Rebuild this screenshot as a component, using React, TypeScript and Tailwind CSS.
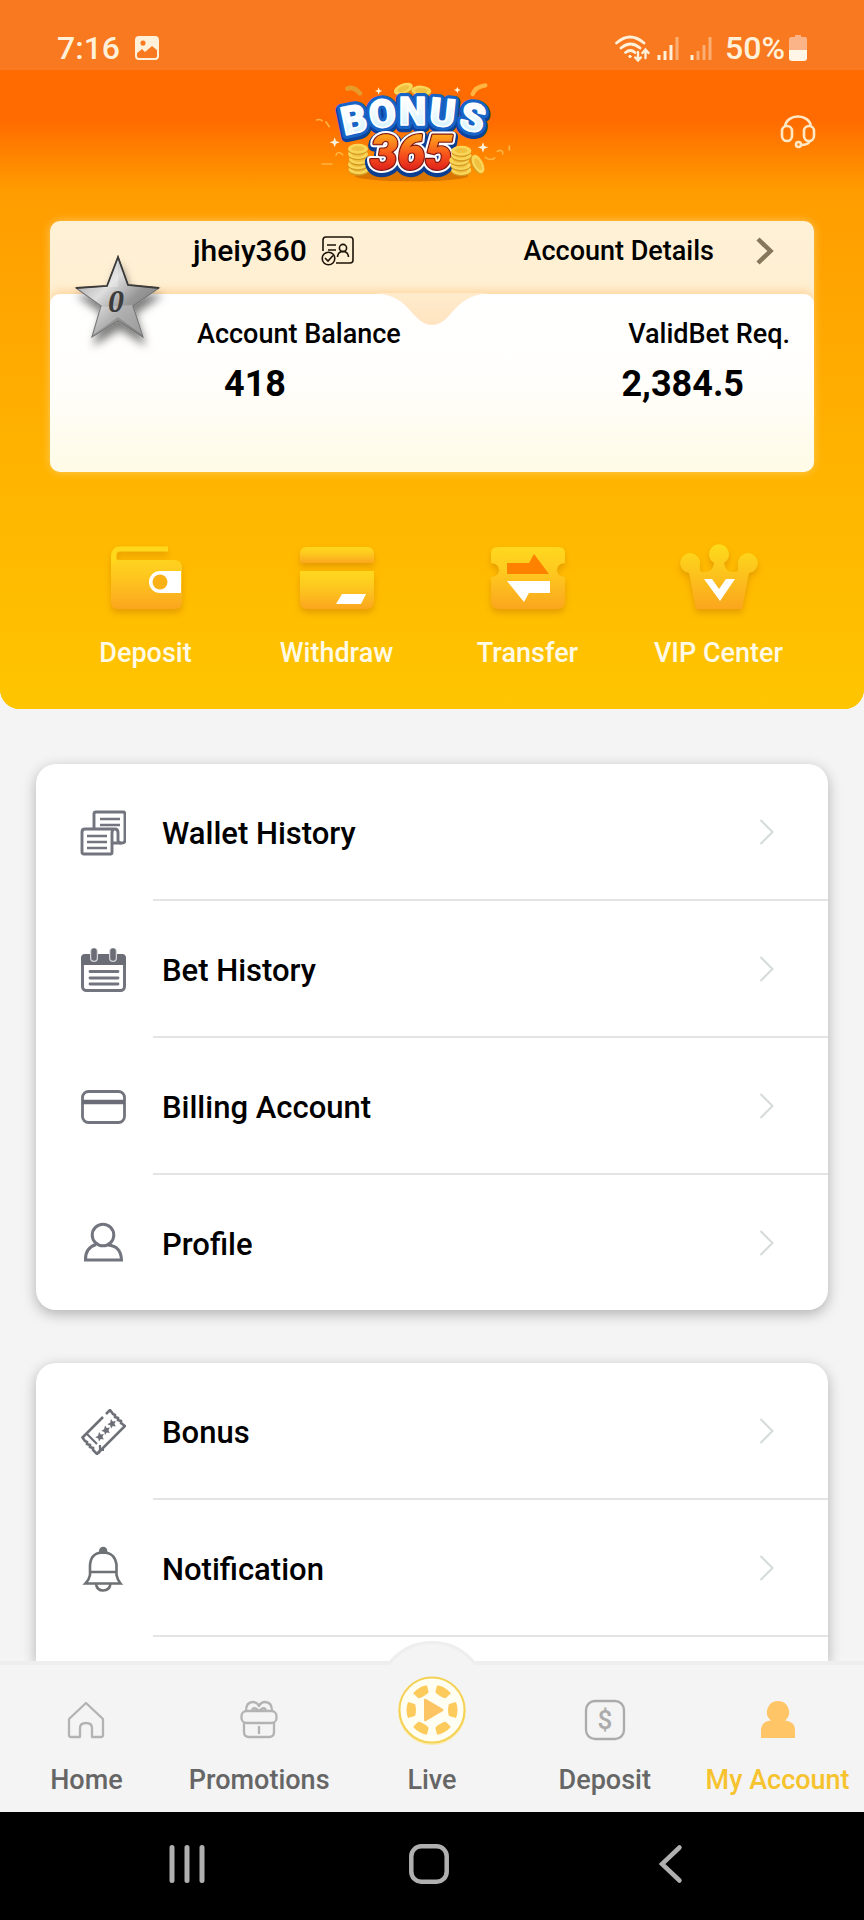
import React from "react";

type IconProps = { className?: string };

/* ---------- status bar ---------- */

function StatusBar() {
  return (
    <div className="flex h-[70px] items-center bg-[#f8791f] px-[57px] pt-[26px] text-[32px] leading-10 font-medium text-[#fff0da]">
      <span>7:16</span>
      <svg className="ml-[15px] size-6" viewBox="0 0 24 24" aria-hidden="true">
        <rect x="1" y="1" width="22" height="22" rx="3" fill="none" stroke="#fff0da" strokeWidth="2" />
        <path fillRule="evenodd" fill="#fff0da" d="M1 3q0-2 2-2h18q2 0 2 2v12l-6-5-7 6-3-3-6 5zM8 4.500a2.600 2.600 0 1 0 .01 0z" />
      </svg>
      <svg className="ml-auto h-[28px] w-[37px]" viewBox="0 0 37 28" fill="none" stroke="#fff0da" strokeLinecap="round" aria-hidden="true">
        <path strokeWidth="2.800" d="M2.500 9Q16 -3 30 9M7 14q9.500-8 19 0M11.500 18.500q5-4 9.500 0" />
        <circle cx="16" cy="22.500" r="1.200" fill="#fff0da" strokeWidth="1" />
        <path strokeWidth="2.400" d="M24 18v8M21.200 23.500L24 26.500l2.800-3M31.500 24v-8M28.500 19l3-3.500 3 3.500" />
      </svg>
      <svg className="ml-[6px] h-6 w-[22px]" viewBox="0 0 22 24" stroke="#fff0da" strokeWidth="3" aria-hidden="true">
        <path d="M2 19v5M8 15v9M14 9v15" />
        <path d="M20 1v23" opacity=".45" />
      </svg>
      <svg className="ml-[11px] h-6 w-[22px]" viewBox="0 0 22 24" stroke="#fff0da" strokeWidth="3" aria-hidden="true">
        <path d="M2 19v5" />
        <path d="M8 15v9M14 9v15M20 1v23" opacity=".45" />
      </svg>
      <span className="ml-[13px]">50%</span>
      <svg className="ml-1 h-[26px] w-[18px]" viewBox="0 0 18 26" aria-hidden="true">
        <path fill="#fbb487" d="M6 0h6v2h4q2 0 2 2v11H0V4q0-2 2-2h4z" />
        <path fill="#fff6e8" d="M0 15h18v8q0 3-3 3H3q-3 0-3-3z" />
      </svg>
    </div>
  );
}

/* ---------- logo ---------- */

const logoLetters = [
  { char: "B", x: 170, y: 188, rotate: -12 },
  { char: "O", x: 251, y: 171, rotate: -6 },
  { char: "N", x: 338, y: 164, rotate: 0 },
  { char: "U", x: 424, y: 168, rotate: 6 },
  { char: "S", x: 509, y: 182, rotate: 13 },
];

function Coin({ x, y, r = 0 }: { x: number; y: number; r?: number }) {
  return (
    <g transform={`translate(${x} ${y}) rotate(${r})`}>
      <ellipse cy="4" rx="30" ry="15" fill="#d39a22" />
      <ellipse rx="30" ry="15" fill="#f9d65a" />
      <ellipse rx="19" ry="8" fill="#f0c040" />
    </g>
  );
}

function Logo() {
  return (
    <svg className="h-[120px] w-[220px] shrink-0" viewBox="0 0 660 360" role="img" aria-label="Bonus 365">
      <defs>
        <linearGradient id="logoFill" x1="0" y1="0" x2="0" y2="1">
          <stop offset=".25" stopColor="#ffffff" />
          <stop offset="1" stopColor="#c9efff" />
        </linearGradient>
        <linearGradient id="logoRed" x1="0" y1="0" x2="0" y2="1">
          <stop offset=".2" stopColor="#ffa41c" />
          <stop offset=".55" stopColor="#f6501c" />
          <stop offset=".85" stopColor="#dc1a1c" />
        </linearGradient>
      </defs>

      <ellipse cx="335" cy="318" rx="170" ry="16" fill="#a34a00" opacity=".4" />

      {/* confetti and sparkles */}
      <g fill="none" stroke="#ffb340" strokeLinecap="round">
        <path strokeWidth="14" d="M142 56q18-8 38 14" stroke="#e59a2a" />
        <path strokeWidth="13" d="M518 72q8-22 38-26" />
        <path strokeWidth="5" d="M50 150q12-4 16 2M78 156l10 14M66 282h30M108 256q4-16 20-2M556 262q16 12 28 2M592 244q18-8 16 8M628 228v12" />
      </g>
      <g fill="#fff2d8">
        <path d="M104 202l4 11 11 4-11 4-4 11-4-11-11-4 11-4zM236 52l3 8 8 3-8 3-3 8-3-8-8-3 8-3zM472 50l3 7 7 3-7 3-3 7-3-7-7-3 7-3zM549 216l4 12 12 4-12 4-4 12-4-12-12-4 12-4z" />
      </g>

      <Coin x={310} y={56} r={-22} />
      <Coin x={364} y={62} r={4} />

      {/* blue outline behind every letter, then the white faces */}
      <g fontFamily="Roboto, sans-serif" fontWeight="900" fontSize="116" textAnchor="middle" strokeLinejoin="round">
        {logoLetters.map((l) => (
          <text key={l.char} transform={`translate(${l.x} ${l.y + 6}) rotate(${l.rotate})`} fill="#0b429c" stroke="#0b429c" strokeWidth="32">
            {l.char}
          </text>
        ))}
        {logoLetters.map((l) => (
          <text key={l.char} transform={`translate(${l.x} ${l.y}) rotate(${l.rotate})`} fill="#1763c6" stroke="#1763c6" strokeWidth="24">
            {l.char}
          </text>
        ))}
        {logoLetters.map((l) => (
          <text key={l.char} transform={`translate(${l.x} ${l.y}) rotate(${l.rotate})`} fill="url(#logoFill)" stroke="#ffffff" strokeWidth="5">
            {l.char}
          </text>
        ))}
      </g>

      <g>
        <Coin x={176} y={298} />
        <Coin x={174} y={283} />
        <Coin x={177} y={268} />
        <Coin x={174} y={252} />
        <Coin x={174} y={236} />
      </g>

      <g fontFamily="Roboto, sans-serif" fontWeight="900" fontStyle="italic" fontSize="146" textAnchor="middle" strokeLinejoin="round">
        <text x="334" y="303" fill="#0b3d91" stroke="#0b3d91" strokeWidth="34">365</text>
        <text x="334" y="297" fill="#ffffff" stroke="#ffffff" strokeWidth="21">365</text>
        <text x="334" y="297" fill="#7c1412" stroke="#7c1412" strokeWidth="9">365</text>
        <text x="334" y="297" fill="url(#logoRed)" stroke="url(#logoRed)" strokeWidth="2">365</text>
      </g>

      <g>
        <Coin x={484} y={300} />
        <Coin x={482} y={285} />
        <Coin x={478} y={270} />
        <Coin x={484} y={256} />
        <Coin x={484} y={242} />
        <Coin x={534} y={282} r={62} />
      </g>
    </svg>
  );
}

function HeadsetIcon({ className }: IconProps) {
  return (
    <svg className={className} viewBox="0 0 44 44" fill="none" stroke="#ffe8c4" strokeWidth="2.600" aria-hidden="true">
      <rect x="6" y="18" width="10" height="15" rx="5" />
      <rect x="28" y="18" width="10" height="15" rx="5" />
      <path d="M9 19C10 5 34 5 35 19M34 33q-2 4-9 4" />
      <circle cx="22.500" cy="36.500" r="2.500" />
    </svg>
  );
}

/* ---------- account card ---------- */

function VerifiedIdIcon() {
  return (
    <svg className="h-[30px] w-[34px]" viewBox="0 0 34 30" fill="none" stroke="#1c1408" strokeWidth="1.600" aria-hidden="true">
      <path d="M2 15V4q0-3 3-3h24q3 0 3 3v20q0 3-3 3H15" />
      <path d="M6 9h9M7 14h8" />
      <circle cx="22" cy="12" r="3.600" />
      <path d="M16.500 21q.5-5.500 5.500-5.500t5.500 5.500" />
      <circle cx="7.500" cy="22.500" r="6.300" />
      <path d="M4 22l3 3 5-5.500" />
    </svg>
  );
}

function StarBadge() {
  return (
    <svg className="absolute top-[30px] left-5 h-[104px] w-[100px]" viewBox="0 0 100 104" role="img" aria-label="VIP level 0">
      <defs>
        <linearGradient id="starFace" x1="0" y1="0" x2="1" y2="1">
          <stop offset="0" stopColor="#8a8a8a" />
          <stop offset=".38" stopColor="#dedede" />
          <stop offset=".6" stopColor="#979797" />
          <stop offset="1" stopColor="#6c6c6c" />
        </linearGradient>
        <filter id="starShadow" x="-20%" y="-20%" width="150%" height="150%">
          <feDropShadow dx="2" dy="8" stdDeviation="4" floodColor="#000" floodOpacity=".5" />
        </filter>
      </defs>
      <path
        filter="url(#starShadow)"
        fill="url(#starFace)"
        stroke="#777"
        strokeWidth="1.200"
        d="M48 6l10 28 31 3-26 18 10 31-25-16-26 16 9-31L6 37l31-2z"
      />
      <path fill="#fff" opacity=".25" d="M48 8v28L37 36 9 38l28-1zM62 54L31 56l-8 28 25-18 24 18z" />
      <path fill="none" stroke="#3a3a3a" strokeWidth="1.800" d="M6 37l31-2L48 6l10 28 31 3" />
      <text x="46" y="61" textAnchor="middle" fontFamily="'Liberation Serif', serif" fontStyle="italic" fontWeight="700" fontSize="32" fill="#3c3c3c">
        0
      </text>
    </svg>
  );
}

function AccountCard() {
  return (
    <section className="relative mx-[50px] mt-[31px] overflow-hidden rounded-[10px] bg-linear-to-b from-[#fff1d6] to-[#ffeccb] shadow-[0_0_8px_rgba(255,214,140,0.7)]">
      <div className="flex h-[60px] items-center pr-10 pl-[143px] text-[27px] leading-8 font-medium">
        <span className="text-[30px]">jheiy360</span>
        <span className="ml-[14px]">
          <VerifiedIdIcon />
        </span>
        <a href="#details" className="ml-auto flex items-center">
          Account Details
          <svg className="ml-[42px] h-[28px] w-[18px]" viewBox="0 0 18 28" fill="none" stroke="#86775a" strokeWidth="4.500" aria-hidden="true">
            <path d="M2 2l12.500 12L2 26" />
          </svg>
        </a>
      </div>

      <div className="relative mt-[13px] flex justify-between rounded-[10px] bg-linear-to-b from-white via-[#fffefb] to-[#fffbe6] pt-6 pr-6 pb-[68px] pl-[147px] shadow-[0_-3px_10px_rgba(255,190,110,0.55)]">
        {/* notch dipping from the header strip */}
        <svg className="absolute -top-px left-1/2 h-8 w-[120px] -translate-x-1/2" viewBox="0 0 120 32" aria-hidden="true">
          <defs>
            <linearGradient id="notch" x1="0" y1="0" x2="0" y2="1">
              <stop offset="0" stopColor="#ffebcc" />
              <stop offset="1" stopColor="#ffe4c0" />
            </linearGradient>
          </defs>
          <path fill="url(#notch)" d="M0 0C24 1 32 10 44 24Q52 32 60 32Q68 32 76 24C88 10 96 1 120 0z" />
        </svg>
        <div>
          <p className="text-[27px] leading-8 font-medium">Account Balance</p>
          <p className="mt-[14px] pl-[27px] text-[36px] leading-10 font-bold">418</p>
        </div>
        <div className="text-right">
          <p className="text-[27px] leading-8 font-medium">ValidBet Req.</p>
          <p className="mt-[14px] pr-[46px] text-[36px] leading-10 font-bold">2,384.5</p>
        </div>
      </div>
      <StarBadge />
    </section>
  );
}

/* ---------- quick actions ---------- */

const actionIconClass = "h-[76px] w-20 drop-shadow-[0_4px_3px_rgba(200,120,0,0.45)]";

function WalletIcon() {
  return (
    <svg className={actionIconClass} viewBox="0 0 80 76" aria-hidden="true">
      <path fill="url(#gold)" d="M5 12q0-1 0 0 1 9 9 9h54q8 0 8 8v34q0 7-7 7H12q-7 0-7-7z" />
      <path fill="none" stroke="#ffd81c" strokeWidth="5" d="M8 24v-8q0-6 6-6h48" />
      <path fill="#fff" d="M75 32H54a11 11 0 0 0 0 22h21z" />
      <circle cx="54" cy="43" r="7.500" fill="#f9b115" />
    </svg>
  );
}

function CardIcon() {
  return (
    <svg className={actionIconClass} viewBox="0 0 80 76" aria-hidden="true">
      <path fill="url(#gold)" d="M3 24V15q0-7 7-7h60q7 0 7 7v9z" />
      <path fill="url(#gold)" d="M3 32h74v30q0 8-8 8H11q-8 0-8-8z" />
      <path fill="#fff" d="M45 55h24l-5 10H39z" />
    </svg>
  );
}

function TransferIcon() {
  return (
    <svg className={actionIconClass} viewBox="0 0 80 76" aria-hidden="true">
      <path fill="url(#gold)" d="M3 14q0-6 7-6h60q7 0 7 6v10q-8 1-8 7t8 7v24q0 8-8 8H11q-8 0-8-8V38q8-1 8-7t-8-7z" />
      <path fill="#ff8100" d="M19 24h22l5-9 15 20H19z" />
      <path fill="#fff" d="M19 42h43v12H41l-5 9z" />
    </svg>
  );
}

function CrownIcon() {
  return (
    <svg className={actionIconClass} viewBox="0 0 80 76" aria-hidden="true">
      <g fill="url(#crownGold)">
        <path d="M17 70L10 34a10 10 0 1 1 11-8q-1 8 4 7 9 0 10-9a10 10 0 1 1 10 0q1 9 10 9 5 1 4-7a10 10 0 1 1 11 8l-7 36q-1 0-2 0H19z" />
      </g>
      <path fill="#fff" d="M25 40h8l7 10 7-10h9L41 62z" />
    </svg>
  );
}

const actions = [
  { label: "Deposit", Icon: WalletIcon },
  { label: "Withdraw", Icon: CardIcon },
  { label: "Transfer", Icon: TransferIcon },
  { label: "VIP Center", Icon: CrownIcon },
];

function QuickActions() {
  return (
    <div className="mx-[50px] grid grid-cols-4 pt-[67px] pb-10">
      <svg className="absolute size-0" aria-hidden="true">
        <defs>
          <linearGradient id="gold" x1="0" y1="0" x2="0" y2="1">
            <stop offset="0" stopColor="#ffd81f" />
            <stop offset=".4" stopColor="#fec91f" />
            <stop offset="1" stopColor="#fba61e" />
          </linearGradient>
          <linearGradient id="crownGold" x1="0" y1="0" x2="0" y2="1">
            <stop offset="0" stopColor="#fddb1c" />
            <stop offset="1" stopColor="#fba61e" />
          </linearGradient>
        </defs>
      </svg>
      {actions.map(({ label, Icon }) => (
        <button key={label} type="button" className="flex flex-col items-center gap-[22px] text-[27px] leading-8 font-medium text-[#fffae6]">
          <Icon />
          {label}
        </button>
      ))}
    </div>
  );
}

/* ---------- menu ---------- */

const menuIconClass = "size-[46px]";

function WalletHistoryIcon() {
  return (
    <svg className={menuIconClass} viewBox="0 0 46 46" fill="none" stroke="#73757e" strokeWidth="2.900" aria-hidden="true">
      <path d="M14 19V4q0-2 2-2h27q2 0 2 2v26q0 3-3 3h-9" />
      <path d="M32 19h3q3 0 3 4v7q0 3 3 3M2 42V22q0-3 3-3h29q-2 1-2 4v20q0 1-1 1H4q-2 0-2-2z" />
      <path strokeWidth="2.300" d="M20 9h20M20 15h20M7 26h20M7 32h20M7 38h20" />
    </svg>
  );
}

function BetHistoryIcon() {
  return (
    <svg className={menuIconClass} viewBox="0 0 46 46" aria-hidden="true">
      <rect x="2.500" y="8.500" width="42" height="35" rx="4" fill="none" stroke="#73757e" strokeWidth="3" />
      <path fill="#6b6d76" d="M1 18v-7q0-4 4-4h37q4 0 4 4v7z" />
      <path stroke="#d6d7da" strokeWidth="8" strokeLinecap="round" d="M14 5v6M33 5v6" />
      <path stroke="#6b6d76" strokeWidth="5.500" strokeLinecap="round" d="M14 4v7M33 4v7" />
      <path stroke="#73757e" strokeWidth="2.800" strokeLinecap="round" d="M10 24.500h28M10 31h28M10 37h28" />
    </svg>
  );
}

function BillingIcon() {
  return (
    <svg className={menuIconClass} viewBox="0 0 46 46" fill="none" stroke="#73757e" strokeWidth="2.800" aria-hidden="true">
      <rect x="2.500" y="7.500" width="42" height="31" rx="6" />
      <path strokeWidth="4.500" stroke="#6b6d76" d="M2 18h43" />
    </svg>
  );
}

function ProfileIcon() {
  return (
    <svg className={menuIconClass} viewBox="0 0 46 46" fill="none" stroke="#73757e" strokeWidth="3" aria-hidden="true">
      <circle cx="23" cy="15" r="10.800" />
      <path d="M16 24.500Q5 28 5.500 40h36Q41 26 28 25" />
    </svg>
  );
}

function BonusIcon() {
  return (
    <svg className={menuIconClass} viewBox="0 0 46 46" fill="none" stroke="#6e7078" strokeWidth="2.600" aria-hidden="true">
      <path d="M23 8L4 27l-2 2M26 5l4-4 3 4 2 1v2l3 1v2l3 1v2l4 3-27 27" />
      <path d="M2 28l3 4 2 1v2l3 1v2l3 1v2l4 4 3-3" />
      <path d="M7 25l10 10M20 36v5h4" strokeWidth="2.200" />
      <g fill="#6e7078" stroke="none">
        <path id="ticketStar" d="M19 23l1.800 2.600 3-.6-1.300 2.800 1.300 2.800-3-.6-1.800 2.400-.7-3-3-1.200 2.800-1.400z" />
        <use href="#ticketStar" x="6" y="-6.500" />
        <use href="#ticketStar" x="12" y="-13" />
      </g>
    </svg>
  );
}

function BellIcon() {
  return (
    <svg className={menuIconClass} viewBox="0 0 46 46" fill="none" stroke="#6e7274" strokeWidth="2.600" aria-hidden="true">
      <path fill="#6e7274" stroke="none" d="M19 8V5a4.200 4.200 0 0 1 8.400 0v3z" />
      <path d="M10 29V19Q11 6.500 23 6.500T36.500 19v10q1 5 4 8.500h-35Q9 34 10 29zM10 26h26.500" />
      <path d="M16 38q1 6.500 7.200 6.500T30.500 38" />
    </svg>
  );
}

type MenuItem = { label: string; Icon: () => React.ReactElement };

function MenuRow({ label, Icon, last }: MenuItem & { last?: boolean }) {
  return (
    <li>
      <a href={`#${label.toLowerCase().replace(" ", "-")}`} className="flex items-center">
        <span className="w-[117px] shrink-0 pl-11">
          <Icon />
        </span>
        <span
          className={`flex flex-1 items-center justify-between pr-[54px] pl-[9px] text-[31px] leading-9 font-medium ${
            last ? "h-[135px]" : "h-[137px] border-b-2 border-[#e3e4e4]"
          }`}
        >
          <span className="pt-1">{label}</span>
          <svg className="h-7 w-[15px]" viewBox="0 0 15 28" fill="none" stroke="#d5dada" strokeWidth="2" aria-hidden="true">
            <path d="M1.500 2l12 12-12 12" />
          </svg>
        </span>
      </a>
    </li>
  );
}

const historyItems: MenuItem[] = [
  { label: "Wallet History", Icon: WalletHistoryIcon },
  { label: "Bet History", Icon: BetHistoryIcon },
  { label: "Billing Account", Icon: BillingIcon },
  { label: "Profile", Icon: ProfileIcon },
];

const noticeItems: MenuItem[] = [
  { label: "Bonus", Icon: BonusIcon },
  { label: "Notification", Icon: BellIcon },
];

/* ---------- bottom navigation ---------- */

function HomeIcon() {
  return (
    <svg className="size-11" viewBox="0 0 44 44" fill="none" stroke="#b3b3b3" strokeWidth="2.300" strokeLinejoin="round" aria-hidden="true">
      <path d="M22 5L5 21v16q0 2 2 2h9V30q0-5 6-5t6 5v9h9q2 0 2-2V21z" />
    </svg>
  );
}

function GiftIcon() {
  return (
    <svg className="size-11" viewBox="0 0 44 44" fill="none" stroke="#b3b3b3" strokeWidth="2.300" strokeLinejoin="round" aria-hidden="true">
      <rect x="4.500" y="13" width="35" height="12" rx="5" />
      <path d="M7 25v9q0 5 5 5h20q5 0 5-5v-9M22 28v8M9 13q0-9 7-9 4 0 6 4 2-4 6-4 7 0 7 9M15 12q2-4 7 1 5-5 7-1" />
    </svg>
  );
}

function DollarIcon() {
  return (
    <svg className="size-11" viewBox="0 0 44 44" aria-hidden="true">
      <rect x="3" y="3" width="38" height="38" rx="9" fill="none" stroke="#ababab" strokeWidth="2.300" />
      <text x="22" y="31" textAnchor="middle" fontFamily="Roboto, sans-serif" fontWeight="500" fontSize="26" fill="#ababab">
        $
      </text>
    </svg>
  );
}

function PersonIcon() {
  return (
    <svg className="size-11" viewBox="0 0 44 44" fill="#ffc566" aria-hidden="true">
      <path d="M22 3a11 11 0 0 1 7 19.500q10 1 10 10V40H5v-7.500q0-9 10-10A11 11 0 0 1 22 3z" />
    </svg>
  );
}

const chipAngles = [0, 60, 120, 180, 240, 300];

function LiveChip() {
  return (
    <svg className="size-[72px]" viewBox="0 0 72 72" aria-hidden="true">
      <circle cx="36" cy="37" r="34" fill="#ffe27a" opacity=".6" />
      <circle cx="36" cy="36" r="32.500" fill="#fffef2" stroke="#f3d257" strokeWidth="2" />
      {chipAngles.map((a) => (
        <path key={a} fill="#fccb5c" d="M53 30l7-2q3 8 0 16l-7-2q-2-6 0-12z" transform={`rotate(${a} 36 36)`} />
      ))}
      <path fill="#fdc463" d="M28 26q0-2 2-1l17 10q1 1 0 2L30 47q-2 1-2-1z" />
    </svg>
  );
}

function NavItem({ label, active, children }: { label: string; active?: boolean; children: React.ReactNode }) {
  return (
    <a
      href={`#nav-${label.toLowerCase().replace(" ", "-")}`}
      className={`flex flex-col items-center justify-end pb-4 text-[27px] leading-8 font-medium whitespace-nowrap ${
        active ? "text-[#f6c32f]" : "text-[#666666]"
      }`}
    >
      {children}
      {label}
    </a>
  );
}

function BottomNav() {
  return (
    <nav className="relative border-t-4 border-[#eeeeee] bg-[#f4f4f4]">
      {/* raised bump under the live chip */}
      <div className="absolute -top-6 left-1/2 h-6 w-28 -translate-x-1/2 overflow-hidden">
        <div className="size-28 rounded-full border-3 border-[#eeeeee] bg-[#f4f4f4]" />
      </div>
      <div className="relative grid h-[147px] grid-cols-5">
        <NavItem label="Home">
          <span className="mb-[22px]"><HomeIcon /></span>
        </NavItem>
        <NavItem label="Promotions">
          <span className="mb-[22px]"><GiftIcon /></span>
        </NavItem>
        <NavItem label="Live">
          <span className="mb-[18px]"><LiveChip /></span>
        </NavItem>
        <NavItem label="Deposit">
          <span className="mb-[22px]"><DollarIcon /></span>
        </NavItem>
        <NavItem label="My Account" active>
          <span className="mb-[22px]"><PersonIcon /></span>
        </NavItem>
      </div>
    </nav>
  );
}

function SystemBar() {
  return (
    <div className="flex h-[108px] items-center justify-center gap-[202px] bg-black pr-1.5 pb-1">
      <button type="button" aria-label="Recents">
        <svg className="size-10" viewBox="0 0 40 40" stroke="#b0b0b0" strokeWidth="5" strokeLinecap="round" aria-hidden="true">
          <path d="M5 3.500v33M20 3.500v33M35 3.500v33" />
        </svg>
      </button>
      <button type="button" aria-label="Home">
        <svg className="size-10" viewBox="0 0 40 40" fill="none" stroke="#b0b0b0" strokeWidth="4.500" aria-hidden="true">
          <rect x="2.300" y="2.300" width="35.400" height="35.400" rx="10" />
        </svg>
      </button>
      <button type="button" aria-label="Back">
        <svg className="size-10" viewBox="0 0 40 40" fill="none" stroke="#b0b0b0" strokeWidth="4.500" strokeLinecap="round" aria-hidden="true">
          <path d="M28.500 3.500L11 20l17.500 16.500" />
        </svg>
      </button>
    </div>
  );
}

export default function App() {
  return (
    <div className="flex min-h-screen flex-col bg-[#f4f4f4] font-[Roboto,sans-serif] text-black">
      <header className="overflow-hidden rounded-b-[20px] bg-[#ffc400]">
        <StatusBar />
        <div className="bg-[linear-gradient(180deg,#ff6b00_0,#ff6b00_50px,#ff9d00_122px,#ffb400_400px,#ffc500_100%)]">
          <div className="flex pr-11">
            <div className="flex-1" />
            <Logo />
            <div className="flex flex-1 justify-end pt-[38px]">
              <button type="button" aria-label="Support" className="size-11">
                <HeadsetIcon className="size-11" />
              </button>
            </div>
          </div>
          <AccountCard />
          <QuickActions />
        </div>
      </header>

      <main className="flex flex-1 flex-col gap-[53px] px-9 pt-[55px]">
        <ul className="rounded-[20px] bg-white shadow-[0_4px_14px_rgba(0,0,0,0.28)]">
          {historyItems.map((item, i) => (
            <MenuRow key={item.label} {...item} last={i === historyItems.length - 1} />
          ))}
        </ul>
        <ul className="flex-1 rounded-t-[20px] bg-white shadow-[0_4px_14px_rgba(0,0,0,0.28)]">
          {noticeItems.map((item) => (
            <MenuRow key={item.label} {...item} />
          ))}
        </ul>
      </main>

      <BottomNav />
      <SystemBar />
    </div>
  );
}
